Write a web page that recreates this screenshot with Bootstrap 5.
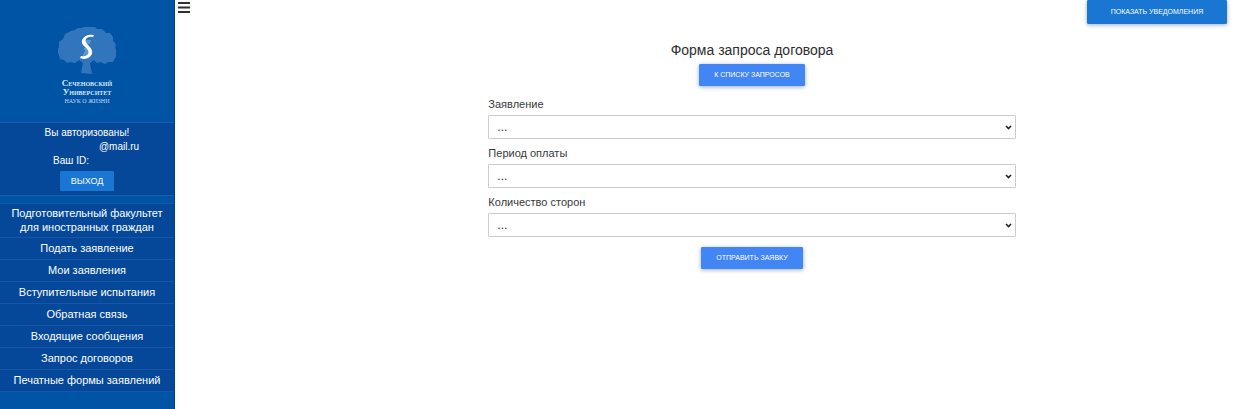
<!DOCTYPE html>
<html lang="ru">
<head>
<meta charset="utf-8">
<meta name="viewport" content="width=device-width, initial-scale=1">
<title>Форма запроса договора</title>
<link href="https://cdn.jsdelivr.net/npm/bootstrap@5.3.0/dist/css/bootstrap.min.css" rel="stylesheet">
<style>
body{font-family:"Liberation Sans",Arial,sans-serif;font-size:11px;line-height:14px;color:#37393c;background:#fff}
.sidebar{width:175px;background:#0054a6;color:#fff;border-right:1px solid #034083}
.brand-area{height:122px;padding-top:27px}
.brand-name{font-family:"Liberation Serif",serif;font-variant:small-caps;font-size:9px;line-height:9px;font-weight:700;color:#dbe8f5}
.brand-motto{font-family:"Liberation Serif",serif;font-size:6px;line-height:8px;color:#c3d8ee}
.user-panel{background:#05489a;border-top:1px solid #1a5caf;border-bottom:1px solid #1a5caf;font-size:10px;padding:3px 0 4px}
.user-mail{padding-left:64px}
.user-id{padding-right:32px}
.btn-flat{--bs-btn-color:#fff;--bs-btn-hover-color:#fff;--bs-btn-bg:#1976d2;--bs-btn-border-color:#1976d2;--bs-btn-hover-bg:#1565c0;--bs-btn-border-radius:1px;--bs-btn-font-size:9px;--bs-btn-line-height:12px;--bs-btn-padding-y:3px;--bs-btn-padding-x:10px}
.btn-logout{margin-top:3px}
.btn-small{--bs-btn-font-size:7px;--bs-btn-padding-y:4px;--bs-btn-padding-x:14px;box-shadow:0 1px 4px rgba(30,70,130,.45)}
.btn-light-blue{--bs-btn-bg:#4285f4;--bs-btn-border-color:#4285f4;--bs-btn-hover-bg:#3367d6}
.btn-notify{min-width:140px;--bs-btn-padding-y:5px}
.side-menu{background:#05489a;border-top:1px solid #1556a6;margin-top:7px}
.side-menu .nav-link{color:#fff;font-size:11px;padding:3px 4px 4px;border-bottom:1px solid #1556a6}
.side-menu .nav-link:first-child{padding:2px 4px 3px}
.toggle-col{width:70px;padding-left:3px}
.page-main{padding-right:32px}
.request-form{width:52%}
.page-title{font-size:14px;line-height:20px;color:#2c2e30}
.form-wrap{margin-right:-32px}
.field-select{height:24px;font-size:12px;line-height:14px;padding:4px 16px 4px 8px;border-color:#ccc;border-radius:1px;color:#333;background-position:right 3px center;background-size:7px 7px;background-image:url("data:image/svg+xml,%3Csvg xmlns='http://www.w3.org/2000/svg' viewBox='0 0 7 7'%3E%3Cpath d='M1 2l2.500 2.500L6 2' fill='none' stroke='%23222' stroke-width='1.600'/%3E%3C/svg%3E")}
.field-label{line-height:16px;margin-bottom:3px}
.field-group{margin-bottom:6px}
.form-head{margin-bottom:10px}
</style>
</head>
<body>
<div class="d-flex min-vh-100">
  <aside class="sidebar flex-shrink-0">
    <div class="brand-area text-center">
      <svg class="d-block mx-auto" width="58" height="48" viewBox="0 0 58 48" aria-hidden="true">
        <path fill="#3176bc" d="M23 46l2-10-4-3-4 3-5-1-3 1-3-3-4-1-1-4-2-4 2-4 0-5 4-3 2-5 6-3 4-1 3-2 4 0 4-3 4 1 4 0 3 3 5 0 4 4 4 0 3 4 0 4 3 3-1 4 4 4-1 4-3 2-2 4-5 0-3 2-4-2-4 1-3-3-4 3 2 11z"/>
        <path fill="none" stroke="#8db6df" stroke-width="1" d="M27 14h6M27 16h5M27 24h6M26 26h6M25 28h4M26 22h4"/>
        <path fill="#fff" d="M36 8Q27 7 24 13Q23 17 27 20Q32 24 30 27Q28 30 23 29L22 31Q30 34 34 27Q35 23 31 19Q26 14 28 12Q30 9 35 10z"/>
      </svg>
      <div class="brand-name mt-1">Сеченовский<br>Университет</div>
      <div class="brand-motto">НАУК О ЖИЗНИ</div>
    </div>
    <div class="user-panel text-center">
      <div>Вы авторизованы!</div>
      <div class="user-mail">@mail.ru</div>
      <div class="user-id">Ваш ID:</div>
      <button type="button" class="btn btn-flat btn-logout d-block mx-auto">ВЫХОД</button>
    </div>
    <nav class="side-menu nav flex-column text-center" aria-label="Меню">
      <a class="nav-link" href="#">Подготовительный факультет для иностранных граждан</a>
      <a class="nav-link" href="#">Подать заявление</a>
      <a class="nav-link" href="#">Мои заявления</a>
      <a class="nav-link" href="#">Вступительные испытания</a>
      <a class="nav-link" href="#">Обратная связь</a>
      <a class="nav-link" href="#">Входящие сообщения</a>
      <a class="nav-link" href="#">Запрос договоров</a>
      <a class="nav-link" href="#">Печатные формы заявлений</a>
    </nav>
  </aside>
  <div class="toggle-col flex-shrink-0">
    <button type="button" class="btn border-0 p-0 d-block" aria-label="Свернуть меню">
      <svg class="d-block" width="12" height="14" viewBox="0 0 12 14"><path d="M0 3h12M0 7.500h12M0 12h12" stroke="#303030" stroke-width="2"/></svg>
    </button>
  </div>
  <main class="page-main flex-grow-1">
    <div class="d-flex justify-content-end">
      <button type="button" class="btn btn-flat btn-small btn-notify">ПОКАЗАТЬ УВЕДОМЛЕНИЯ</button>
    </div>
    <div class="form-wrap pt-3">
      <form class="request-form mx-auto">
        <div class="form-head text-center">
          <h1 class="page-title fw-normal mb-1">Форма запроса договора</h1>
          <button type="button" class="btn btn-flat btn-small btn-light-blue">К СПИСКУ ЗАПРОСОВ</button>
        </div>
        <div class="field-group">
          <label class="field-label d-block" for="application">Заявление</label>
          <select class="form-select field-select" id="application"><option>...</option></select>
        </div>
        <div class="field-group">
          <label class="field-label d-block" for="period">Период оплаты</label>
          <select class="form-select field-select" id="period"><option>...</option></select>
        </div>
        <div class="field-group">
          <label class="field-label d-block" for="parties">Количество сторон</label>
          <select class="form-select field-select" id="parties"><option>...</option></select>
        </div>
        <div class="text-center pt-1">
          <button type="submit" class="btn btn-flat btn-small btn-light-blue">ОТПРАВИТЬ ЗАЯВКУ</button>
        </div>
      </form>
    </div>
  </main>
</div>
<script src="https://cdn.jsdelivr.net/npm/bootstrap@5.3.0/dist/js/bootstrap.bundle.min.js"></script>
</body>
</html>
